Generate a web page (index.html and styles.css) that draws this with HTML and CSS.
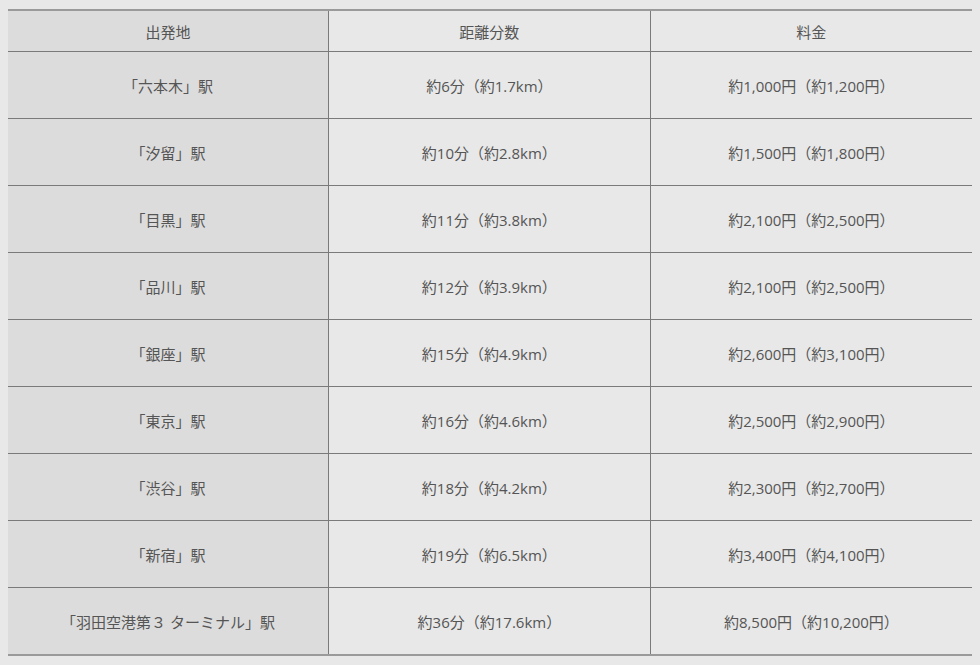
FILE: index.html
```html
<!DOCTYPE html>
<html lang="ja">
<head>
<meta charset="utf-8">
<title>料金表</title>
<link rel="stylesheet" href="styles.css">
</head>
<body>
<table class="fare-table">
  <thead>
    <tr>
      <th class="col-origin">出発地</th>
      <th>距離分数</th>
      <th>料金</th>
    </tr>
  </thead>
  <tbody>
    <tr><td class="col-origin">「六本木」駅</td><td>約6分（約1.7km）</td><td>約1,000円（約1,200円）</td></tr>
    <tr><td class="col-origin">「汐留」駅</td><td>約10分（約2.8km）</td><td>約1,500円（約1,800円）</td></tr>
    <tr><td class="col-origin">「目黒」駅</td><td>約11分（約3.8km）</td><td>約2,100円（約2,500円）</td></tr>
    <tr><td class="col-origin">「品川」駅</td><td>約12分（約3.9km）</td><td>約2,100円（約2,500円）</td></tr>
    <tr><td class="col-origin">「銀座」駅</td><td>約15分（約4.9km）</td><td>約2,600円（約3,100円）</td></tr>
    <tr><td class="col-origin">「東京」駅</td><td>約16分（約4.6km）</td><td>約2,500円（約2,900円）</td></tr>
    <tr><td class="col-origin">「渋谷」駅</td><td>約18分（約4.2km）</td><td>約2,300円（約2,700円）</td></tr>
    <tr><td class="col-origin">「新宿」駅</td><td>約19分（約6.5km）</td><td>約3,400円（約4,100円）</td></tr>
    <tr><td class="col-origin">「羽田空港第３ ターミナル」駅</td><td>約36分（約17.6km）</td><td>約8,500円（約10,200円）</td></tr>
  </tbody>
</table>
</body>
</html>
```
FILE: styles.css
```css
html, body {
  background: #e8e8e8;
}
body {
  margin: 9px 8px 0 8px;
  font-family: "Open Sans", "Noto Sans CJK JP", sans-serif;
  color: #555;
  font-size: 15px;
}
.fare-table {
  width: 964px;
  border-collapse: collapse;
  table-layout: fixed;
  border-top: 2px solid #9a9a9a;
  border-bottom: 2px solid #9a9a9a;
}
.fare-table th,
.fare-table td {
  text-align: center;
  vertical-align: middle;
  font-weight: normal;
  padding: 0;
  border-bottom: 1px solid #7a7a7a;
  border-left: 1px solid #7a7a7a;
}
.fare-table th:first-child,
.fare-table td:first-child {
  border-left: none;
}
.fare-table tbody tr:last-child td {
  border-bottom: 2px solid #9a9a9a;
}
.fare-table th {
  height: 40px;
}
.fare-table td {
  height: 66px;
}
.col-origin {
  width: 320px;
  background: #dcdcdc;
}
```
